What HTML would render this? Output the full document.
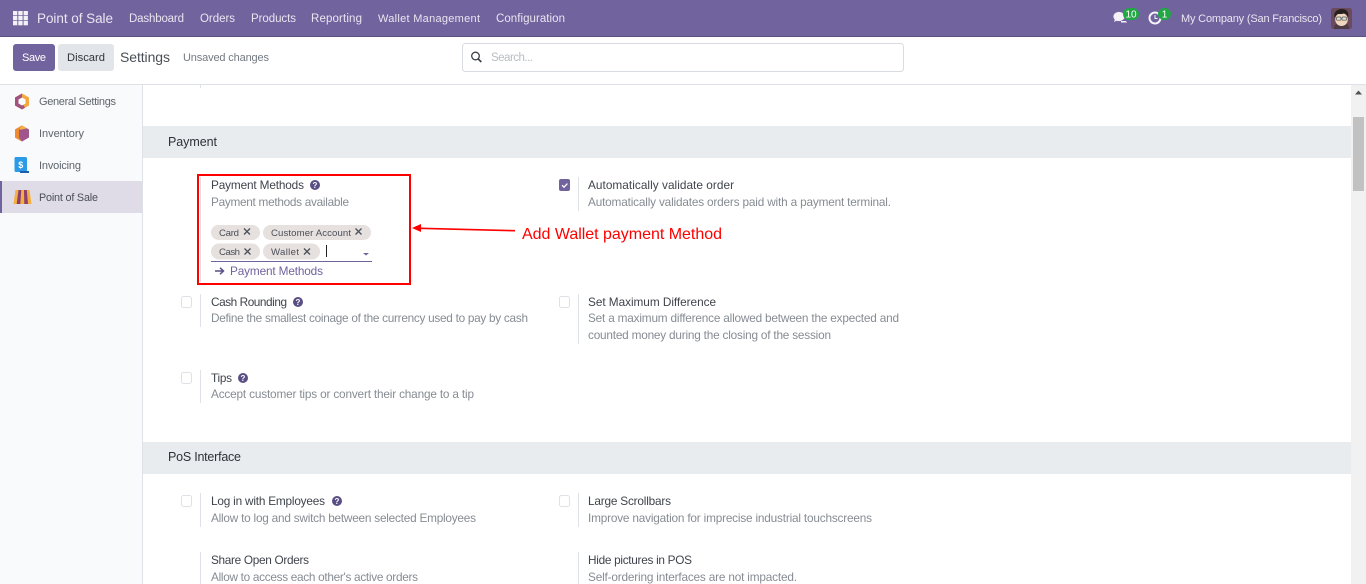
<!DOCTYPE html>
<html lang="en"><head><meta charset="utf-8"><title>Settings</title>
<style>
html,body{margin:0;padding:0;width:1366px;height:584px;overflow:hidden;background:#fff}
svg{display:block}
text{font-family:"Liberation Sans",sans-serif;font-size:12px;white-space:pre}
.n{fill:#e9e5f0;font-size:11.5px}
.t{fill:#3f444c;font-size:11.8px}
.s{fill:#868c93;font-size:11.8px}
.m{fill:#5f656d;font-size:11px}
.h{fill:#2e3238;font-size:12.5px}
.g{fill:#4b4f57;font-size:9.6px}
.hi{fill:#fff;font-size:8px;font-weight:bold;text-anchor:middle}
</style></head><body>
<svg xmlns="http://www.w3.org/2000/svg" width="1366" height="584" viewBox="0 0 1366 584">
<rect width="1366" height="584" fill="#fff"/>
<!-- nav -->
<rect width="1366" height="37" fill="#71639e"/><rect y="36" width="1366" height="1" fill="#5d5186"/>
<g fill="#f3f0f8">
<rect x="13" y="11" width="4.3" height="4.3"/><rect x="18.3" y="11" width="4.3" height="4.3"/><rect x="23.6" y="11" width="4.3" height="4.3"/>
<rect x="13" y="16" width="4.3" height="4.3"/><rect x="18.3" y="16" width="4.3" height="4.3"/><rect x="23.6" y="16" width="4.3" height="4.3"/>
<rect x="13" y="21" width="4.3" height="4.3"/><rect x="18.3" y="21" width="4.3" height="4.3"/><rect x="23.6" y="21" width="4.3" height="4.3"/>
</g>
<text class="n" x="37" y="23" textLength="76" style="font-size:13.5px">Point of Sale</text>
<text class="n" x="129" y="22" textLength="55">Dashboard</text>
<text class="n" x="200" y="22" textLength="35">Orders</text>
<text class="n" x="251" y="22" textLength="45">Products</text>
<text class="n" x="311" y="22" textLength="51">Reporting</text>
<text class="n" x="378" y="22" textLength="102" style="font-size:11px">Wallet Management</text>
<text class="n" x="496" y="22" textLength="69">Configuration</text>
<text class="n" x="1181" y="22" textLength="141" style="font-size:11px">My Company (San Francisco)</text>
<!-- chat icon -->
<ellipse cx="1119" cy="16.5" rx="5.6" ry="4.6" fill="#f4f2f8"/>
<path d="M1115 19l-1 3 4-2zM1121 21h5l1 2-1-.5h-5z" fill="#f4f2f8"/>
<rect x="1123" y="8" width="16" height="12" rx="6" fill="#22a745"/>
<text x="1131" y="17.5" text-anchor="middle" fill="#fff" style="font-size:10px">10</text>
<!-- clock icon -->
<circle cx="1155" cy="18" r="5.5" fill="none" stroke="#f4f2f8" stroke-width="2"/>
<path d="M1155 15v3.500h2.500" fill="none" stroke="#f4f2f8" stroke-width="1"/>
<rect x="1158" y="8" width="13" height="12" rx="6" fill="#22a745"/>
<text x="1164.500" y="17.500" text-anchor="middle" fill="#fff" style="font-size:10px">1</text>
<!-- avatar -->
<rect x="1331" y="8" width="21" height="21" rx="2.500" fill="#6b4a5c"/>
<path d="M1334 29c0-4 2-6 7.500-6s7.500 2 7.500 6z" fill="#4d3a44"/>
<ellipse cx="1341.500" cy="19.500" rx="6.300" ry="6.500" fill="#efd6bf"/>
<path d="M1334.500 18c-1.500-6 3-9 7.500-9s7.500 3 6 9c-1-3-2-4.500-4-4.500-3 1-6 0-7 1s-1.800 2-2.500 3.500z" fill="#26211f"/>
<rect x="1336.500" y="17" width="4.500" height="3.200" rx="1" fill="#d9dcd2" stroke="#555" stroke-width=".7"/>
<rect x="1342" y="17" width="4.500" height="3.200" rx="1" fill="#d9dcd2" stroke="#555" stroke-width=".7"/>
<!-- control panel -->
<rect x="13" y="44" width="42" height="27" rx="3" fill="#71639e"/>
<text x="22" y="61" fill="#fff" textLength="24" style="font-size:11px">Save</text>
<rect x="58" y="44" width="56" height="27" rx="3" fill="#e2e5e9"/>
<text x="67" y="61" fill="#31353b" textLength="38" style="font-size:11.2px">Discard</text>
<text x="120" y="62" fill="#4a4f57" textLength="50" style="font-size:14px">Settings</text>
<text class="m" x="183" y="61" textLength="86" style="fill:#737a82">Unsaved changes</text>
<rect x="462.500" y="43.500" width="441" height="28" rx="3" fill="#fff" stroke="#d8dbdf"/>
<circle cx="475.500" cy="56" r="3.800" fill="none" stroke="#3b3f45" stroke-width="1.300"/>
<path d="M478.300 59l3 3" stroke="#3b3f45" stroke-width="1.600"/>
<text x="491" y="61" fill="#b9bdc2" textLength="42" style="font-size:11.500px">Search...</text>
<rect y="84" width="1366" height="1" fill="#dee2e6"/>
<!-- sidebar -->
<rect y="85" width="142" height="499" fill="#f9fafb"/>
<rect x="142" y="85" width="1" height="499" fill="#dee2e6"/>
<rect y="181" width="142" height="32" fill="#dfdce8"/>
<rect y="181" width="2" height="32" fill="#71639e"/>
<path d="M22 93.500l7 4v8l-7 4-7-4v-8z" fill="#f5a742"/>
<path d="M22 93.500l-7 4v8l7 4 3-1.800-3-5v-9z" fill="#a2527f"/>
<path d="M22 97.500l3.500 2v4l-3.500 2-3.500-2v-4z" fill="#fff"/>
<path d="M22 125.500l7 4v8l-7 4-7-4v-8z" fill="#a0558c"/>
<path d="M22 125.500l-7 4v8l7 4-3-4v-8z" fill="#f18b30"/>
<path d="M22 125.500l-3 4 3 0 5-1.200z" fill="#f9b13e"/>
<rect x="14.500" y="157" width="12.500" height="15" rx="1.500" fill="#2b9be8"/>
<rect x="20" y="171" width="9" height="2" fill="#1c5fae"/>
<text x="20.700" y="168" text-anchor="middle" fill="#fff" style="font-size:9px;font-weight:bold">$</text>
<path d="M15.500 190h14l2 14h-18z" fill="#f3b040"/>
<path d="M18.500 190h2.800l-1 14h-3.600zM24 190h2.800l1.200 14h-3.700z" fill="#8d3f6f"/>
<text class="m" x="39" y="105" textLength="77">General Settings</text>
<text class="m" x="39" y="137" textLength="45">Inventory</text>
<text class="m" x="39" y="169" textLength="42">Invoicing</text>
<text class="m" x="39" y="201" textLength="59" style="fill:#4a4e57;font-size:10.8px">Point of Sale</text>
<!-- scrollbar -->
<rect x="1351" y="85" width="15" height="499" fill="#f1f1f1"/>
<rect x="1353" y="117" width="11" height="74" fill="#c1c1c1"/>
<path d="M1358.500 90.500l3.500 4h-7z" fill="#505050"/>
<!-- section bands -->
<rect x="143" y="126" width="1208" height="32" fill="#e9ecef"/>
<rect x="143" y="442" width="1208" height="32" fill="#e9ecef"/>
<text class="h" x="168" y="146" textLength="49">Payment</text>
<text class="h" x="168" y="461" textLength="73">PoS Interface</text>
<!-- vertical separators -->
<g fill="#dee2e6">
<rect x="200" y="85" width="1" height="3"/>
<rect x="200" y="177" width="1" height="105"/>
<rect x="578" y="177" width="1" height="34"/>
<rect x="200" y="294" width="1" height="33"/>
<rect x="578" y="294" width="1" height="50"/>
<rect x="200" y="370" width="1" height="33"/>
<rect x="200" y="493" width="1" height="34"/>
<rect x="578" y="493" width="1" height="34"/>
<rect x="200" y="552" width="1" height="32"/>
<rect x="578" y="552" width="1" height="32"/>
</g>
<!-- checkboxes -->
<g fill="#fff" stroke="#dee2e6">
<rect x="181.500" y="296.500" width="10" height="11" rx="2"/>
<rect x="559.500" y="296.500" width="10" height="11" rx="2"/>
<rect x="181.500" y="372.500" width="10" height="11" rx="2"/>
<rect x="181.500" y="495.500" width="10" height="11" rx="2"/>
<rect x="559.500" y="495.500" width="10" height="11" rx="2"/>
</g>
<rect x="559" y="179" width="11" height="12" rx="2" fill="#71639e"/>
<path d="M562 185.200l2 2 3.400-3.600" fill="none" stroke="#fff" stroke-width="1.300"/>
<!-- help icons -->
<g fill="#5a4f85">
<circle cx="315" cy="185" r="5"/><circle cx="298" cy="302" r="5"/><circle cx="243" cy="378" r="5"/><circle cx="337" cy="501" r="5"/>
</g>
<text class="hi" x="315" y="188">?</text><text class="hi" x="298" y="305">?</text><text class="hi" x="243" y="381">?</text><text class="hi" x="337" y="504">?</text>
<!-- settings text -->
<text class="t" x="211" y="189" textLength="93">Payment Methods</text>
<text class="s" x="211" y="206" textLength="138">Payment methods available</text>
<text class="t" x="588" y="189" textLength="146">Automatically validate order</text>
<text class="s" x="588" y="206" textLength="303">Automatically validates orders paid with a payment terminal.</text>
<text class="t" x="211" y="306" textLength="76">Cash Rounding</text>
<text class="s" x="211" y="322" textLength="317">Define the smallest coinage of the currency used to pay by cash</text>
<text class="t" x="588" y="306" textLength="128">Set Maximum Difference</text>
<text class="s" x="588" y="322" textLength="311">Set a maximum difference allowed between the expected and</text>
<text class="s" x="588" y="339" textLength="243">counted money during the closing of the session</text>
<text class="t" x="211" y="382" textLength="21">Tips</text>
<text class="s" x="211" y="398" textLength="263">Accept customer tips or convert their change to a tip</text>
<text class="t" x="211" y="505" textLength="114">Log in with Employees</text>
<text class="s" x="211" y="522" textLength="265">Allow to log and switch between selected Employees</text>
<text class="t" x="588" y="505" textLength="83">Large Scrollbars</text>
<text class="s" x="588" y="522" textLength="284">Improve navigation for imprecise industrial touchscreens</text>
<text class="t" x="211" y="564" textLength="98">Share Open Orders</text>
<text class="s" x="211" y="581" textLength="207">Allow to access each other's active orders</text>
<text class="t" x="588" y="564" textLength="104">Hide pictures in POS</text>
<text class="s" x="588" y="581" textLength="209">Self-ordering interfaces are not impacted.</text>
<!-- tags -->
<g fill="#e6e0df">
<rect x="211" y="225" width="49" height="15" rx="7.500"/>
<rect x="263" y="225" width="108" height="15" rx="7.500"/>
<rect x="211" y="243.500" width="49" height="16" rx="8"/>
<rect x="263" y="243.500" width="57" height="16" rx="8"/>
</g>
<text class="g" x="219" y="236" textLength="20">Card</text>
<text class="g" x="271" y="236" textLength="80">Customer Account</text>
<text class="g" x="219" y="255" textLength="21">Cash</text>
<text class="g" x="271" y="255" textLength="28">Wallet</text>
<g stroke="#4b4f57" stroke-width="1.300" fill="none">
<path d="M244 228.500l6 6M250 228.500l-6 6M355.500 228.500l6 6M361.500 228.500l-6 6M244.500 248.500l6 6M250.500 248.500l-6 6M304 248.500l6 6M310 248.500l-6 6"/>
</g>
<rect x="326" y="245" width="1" height="12" fill="#222"/>
<path d="M363 253h6l-3 2.500z" fill="#71639e"/>
<rect x="211" y="261" width="161" height="1" fill="#71639e"/>
<path d="M215 271h8M220 267.800l3.500 3.200-3.500 3.200" fill="none" stroke="#5a4f85" stroke-width="1.500"/>
<text x="230" y="275" fill="#71639e" textLength="93" style="font-size:11.800px">Payment Methods</text>
<!-- annotation -->
<rect x="198" y="175" width="212" height="109" fill="none" stroke="#f00" stroke-width="2"/>
<path d="M420 228.300l95 2.400" stroke="#f00" stroke-width="1.600" fill="none"/>
<path d="M412 228l9-4v8z" fill="#f00"/>
<text x="522" y="239" fill="#f00" textLength="200" style="font-size:16px">Add Wallet payment Method</text>
</svg>
</body></html>
